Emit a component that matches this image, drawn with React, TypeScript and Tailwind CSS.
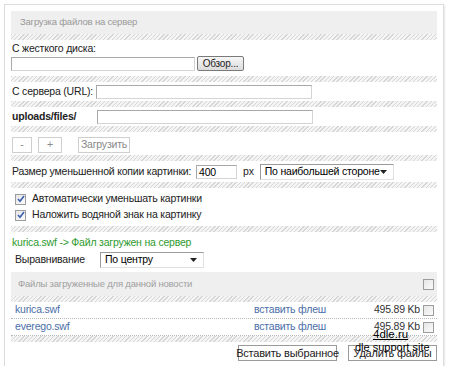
import React from "react";

const hatch =
  "h-[6px] bg-[repeating-linear-gradient(135deg,#d6d6d6_0px,#d6d6d6_1px,#f4f4f4_1px,#f4f4f4_3px)]";

function Input({ w, value }: { w: string; value?: string }) {
  return (
    <div
      className={`${w} h-[14px] shrink-0 border border-[#a8a8a8] border-r-[#d4d4d4] border-b-[#d4d4d4] bg-white leading-[12px] px-[2px] text-black`}
    >
      {value}
    </div>
  );
}

function Select({ w, value }: { w: string; value: string }) {
  return (
    <div
      className={`${w} h-[16px] shrink-0 border border-[#9a9a9a] border-r-[#e0e0e0] border-b-[#e0e0e0] bg-white flex items-center justify-between pl-[4px] pr-[6px] text-black`}
    >
      <span>{value}</span>
      <svg width="7" height="4" viewBox="0 0 7 4">
        <path d="M0 0h7L3.5 4z" fill="#222" />
      </svg>
    </div>
  );
}

function Check({ on }: { on?: boolean }) {
  return (
    <div className="w-[11px] h-[11px] shrink-0 border border-[#9c9c9c] bg-[linear-gradient(135deg,#e6e6e6,#fafafa)] flex items-center justify-center">
      {on && (
        <svg width="8" height="8" viewBox="0 0 8 8">
          <path d="M1 4l2 2.2L7 1" fill="none" stroke="#3b5fb0" strokeWidth="1.6" />
        </svg>
      )}
    </div>
  );
}

function GhostBtn({ w, label }: { w: string; label: string }) {
  return (
    <div
      className={`${w} h-[16px] border border-[#cfcfcf] bg-white text-[#888] flex items-center justify-center`}
    >
      {label}
    </div>
  );
}

export default function App() {
  const files = ["kurica.swf", "everego.swf"];
  return (
    <div
      className="relative w-[450px] h-[366px] overflow-hidden bg-white pl-[4px] pt-[4px] text-[#222] whitespace-nowrap"
      style={{ fontFamily: '"Liberation Sans", Arial, sans-serif' }}
    >
      <div className="w-[440px] h-[380px] border border-[#dcdcdc] shadow-[1px_1px_2px_#e8e8e8] p-[6px] text-[10.5px] tracking-[-0.2px]">
        <div className="h-[23px] bg-[#efefef] flex items-center pl-[9px] text-[9.5px] text-[#999]">
          Загрузка файлов на сервер
        </div>
        <div className={hatch} />

        <div className="pt-[2px] leading-[13px] pl-[1px]">С жесткого диска:</div>
        <div className="flex items-center gap-[2px] mt-[1px]">
          <Input w="w-[184px]" />
          <div className="w-[47px] h-[15px] border border-[#7a7a7a] rounded-[2px] bg-[linear-gradient(#f6f6f6,#dcdcdc)] text-[10px] flex items-center justify-center">
            Обзор...
          </div>
        </div>
        <div className={`${hatch} mt-[5px]`} />

        <div className="flex items-center h-[17px] mt-[1px] pl-[1px]">
          <span className="w-[84px]">С сервера (URL):</span>
          <Input w="w-[216px]" />
        </div>
        <div className={`${hatch} mt-[1px]`} />

        <div className="flex items-center h-[17px] mt-[1px] pl-[1px]">
          <span className="w-[85px] font-bold">uploads/files/</span>
          <Input w="w-[216px]" />
        </div>
        <div className={`${hatch} mt-[1px]`} />

        <div className="flex items-center h-[16px] mt-[5px] pl-[1px]">
          <GhostBtn w="w-[20px]" label="-" />
          <div className="w-[6px]" />
          <GhostBtn w="w-[24px]" label="+" />
          <div className="w-[16px]" />
          <GhostBtn w="w-[52px]" label="Загрузить" />
        </div>
        <div className={`${hatch} mt-[2px]`} />

        <div className="flex items-center h-[17px] mt-[2px] pl-[1px]">
          <span className="w-[184px]">Размер уменьшенной копии картинки:</span>
          <Input w="w-[41px]" value="400" />
          <span className="ml-[6px] mr-[6px]">px</span>
          <Select w="w-[134px]" value="По наибольшей стороне" />
        </div>
        <div className={`${hatch} mt-[2px]`} />

        <div className="flex flex-col mt-[3px] pl-[4px]">
          <div className="flex items-center gap-[6px] h-[16px]">
            <Check on />
            <span>Автоматически уменьшать картинки</span>
          </div>
          <div className="flex items-center gap-[6px] h-[16px]">
            <Check on />
            <span>Наложить водяной знак на картинку</span>
          </div>
        </div>
        <div className={`${hatch} mt-[3px]`} />

        <div className="mt-[4px] pl-[1px] text-[#2e9a2e] leading-[13px]">
          kurica.swf -&gt; Файл загружен на сервер
        </div>

        <div className="flex items-center h-[16px] mt-[3px] pl-[4px]">
          <span className="w-[85px]">Выравнивание</span>
          <Select w="w-[104px]" value="По центру" />
        </div>

        <div className="h-[24px] bg-[#efefef] flex items-center justify-between pl-[7px] pr-[3px] mt-[4px] text-[9.5px] text-[#a0a0a0]">
          <span>Файлы загруженные для данной новости</span>
          <Check />
        </div>
        <div className={hatch} />

        {files.map((f) => (
          <div
            key={f}
            className="flex items-center h-[17px] border-b border-dotted border-[#b8b8b8] pl-[4px] pr-[3px] text-[#4a6ea8]"
          >
            <span className="w-[239px]">{f}</span>
            <span className="flex-1">вставить флеш</span>
            <span className="text-[#333] mr-[3px]">495.89 Kb</span>
            <Check />
          </div>
        ))}
        <div className={hatch} />

        <div className="flex justify-end gap-[11px] mt-[3px] text-[11px]">
          <div className="w-[99px] h-[16px] border border-[#9a9a9a] bg-white flex items-center justify-center">
            Вставить выбранное
          </div>
          <div className="w-[89px] h-[16px] border border-[#9a9a9a] bg-white flex items-center justify-center">
            Удалить файлы
          </div>
        </div>
      </div>

      <div className="absolute left-[373px] top-[328px] text-[11.5px] leading-[13px] text-black underline">
        4dle.ru
      </div>
      <div className="absolute left-[355px] top-[341px] text-[11px] leading-[13px] text-black">
        dle support site
      </div>
    </div>
  );
}
